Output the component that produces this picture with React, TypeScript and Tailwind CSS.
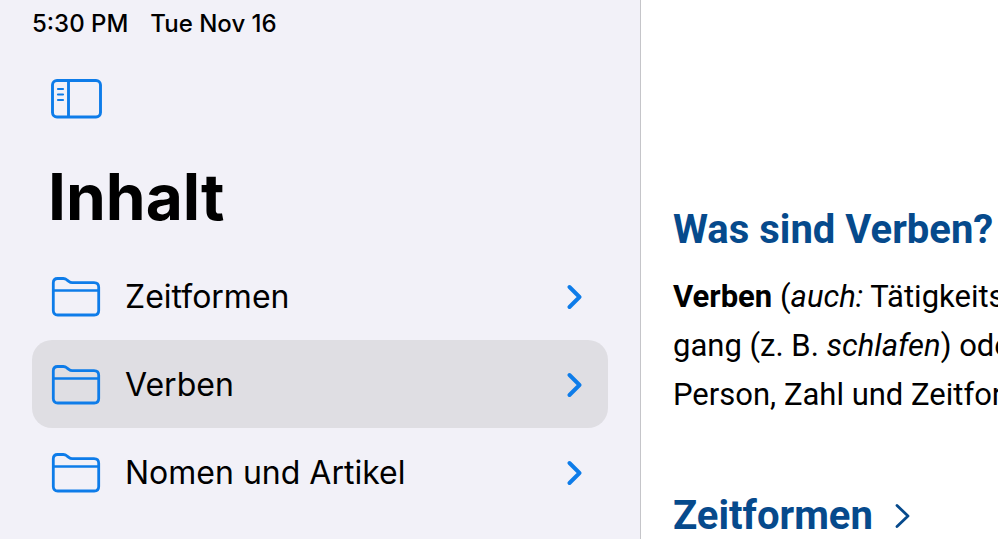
import React, { useState } from 'react';

const topics = ['Zeitformen', 'Verben', 'Nomen und Artikel'];

const SidebarIcon = () => (
  <svg width="52" height="40" viewBox="0 0 52 40" fill="none" stroke="currentColor" aria-hidden="true">
    <rect x="2.5" y="1.5" width="48" height="36.5" rx="4.5" strokeWidth="2.9" />
    <path d="M18.5 2v36" strokeWidth="2.9" />
    <path d="M8 10h5M8 15.5h5M8 21h5" strokeWidth="2.2" strokeLinecap="round" />
  </svg>
);

const FolderIcon = () => (
  <svg width="50" height="40" viewBox="0 0 50 40" fill="none" stroke="currentColor" strokeWidth="2.8" aria-hidden="true">
    <path d="M2.3 33.5V5.8Q2.3 1.5 6.6 1.5H12.3Q14.3 1.5 15.8 2.8L17.8 4.4Q19.3 5.6 21.3 5.6H43Q47.7 5.6 47.7 10.2V33.5Q47.7 38 43.2 38H6.8Q2.3 38 2.3 33.5Z" />
    <path d="M2.3 13.5h45.4" strokeWidth="2.6" />
  </svg>
);

const Chevron = () => (
  <svg width="16" height="26" viewBox="0 0 16 26" fill="none" stroke="currentColor" strokeWidth="3.9" aria-hidden="true">
    <path d="M2.5 3L12.5 13L2.5 23" strokeLinecap="round" strokeLinejoin="round" />
  </svg>
);

const App = () => {
  const [selected, setSelected] = useState('Verben');

  return (
    <div className="grid min-h-screen grid-cols-[641fr_357fr] bg-white text-black">
      <aside className="border-r border-[#c5c5c9] bg-[#f2f1f8] px-8 font-['Inter',sans-serif]">
        <div className="flex gap-[22px] pt-2 text-[24px] leading-8 font-medium">
          <span>5:30 PM</span>
          <span>Tue Nov 16</span>
        </div>
        <button aria-label="Inhalt ausblenden" className="mt-[39px] ml-[18px] block text-[#0e7ce9]">
          <SidebarIcon />
        </button>
        <h1 className="mt-10 ml-4 text-[64px] leading-[76px] font-bold">Inhalt</h1>
        <nav className="mt-[17px]">
          {topics.map((topic) => (
            <button
              key={topic}
              onClick={() => setSelected(topic)}
              className={`flex h-[88px] w-full items-center rounded-[20px] pt-px pr-[25px] pl-[19px] text-left text-[32px] ${
                selected === topic ? 'bg-[#dfdee3]' : ''
              }`}
            >
              <span className="text-[#0e7ce9]">
                <FolderIcon />
              </span>
              <span className="ml-6 flex-1">{topic}</span>
              <span className="text-[#0e7ce9]">
                <Chevron />
              </span>
            </button>
          ))}
        </nav>
      </aside>

      <main className="overflow-hidden pt-[204px] pl-8 font-['Roboto',sans-serif] whitespace-nowrap">
        <h2 className="text-[40px] leading-[52px] font-bold text-[#064a8c]">Was sind Verben?</h2>
        <p className="mt-4 text-[31px] leading-[49px]">
          <b>Verben</b> (<i>auch:</i> Tätigkeitswörter)
          <br />
          gang (z. B. <i>schlafen</i>) oder
          <br />
          Person, Zahl und Zeitform
        </p>
        <h2 className="mt-[71px] text-[40px] leading-[52px] font-bold text-[#064a8c]">
          <a href="#zeitformen" className="flex items-center gap-[22px]">
            Zeitformen
            <svg width="16" height="26" viewBox="0 0 16 26" fill="none" stroke="currentColor" strokeWidth="2.8" aria-hidden="true">
              <path d="M2 2.5L13 13L2 23.5" strokeLinecap="round" strokeLinejoin="round" />
            </svg>
          </a>
        </h2>
      </main>
    </div>
  );
};

export default App;
